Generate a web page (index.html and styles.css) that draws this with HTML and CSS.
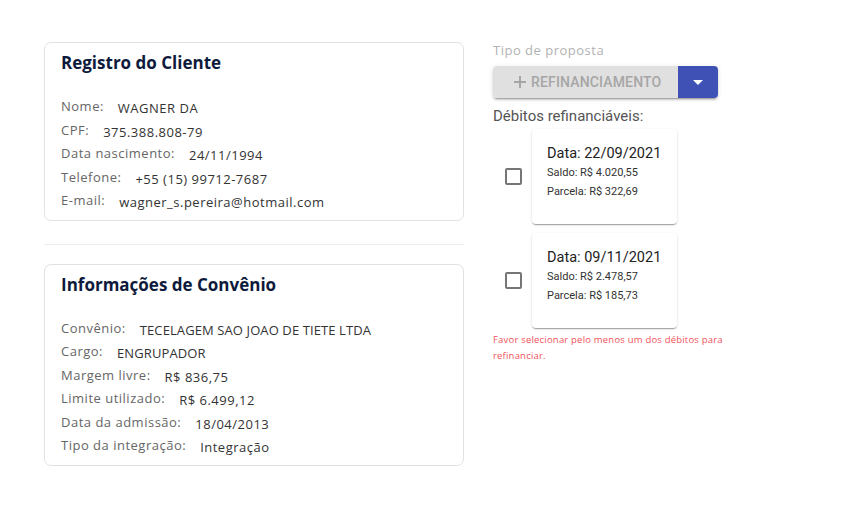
FILE: index.html
```html
<!DOCTYPE html>
<html lang="pt-BR">
<head>
<meta charset="utf-8">
<title>Refinanciamento</title>
<link rel="stylesheet" href="styles.css">
</head>
<body>
<div class="page">
  <div class="left">
    <section class="card">
      <h2 class="card-title">Registro do Cliente</h2>
      <div class="rows">
        <div class="row"><span class="label">Nome:</span><span class="value">WAGNER DA</span></div>
        <div class="row"><span class="label">CPF:</span><span class="value">375.388.808-79</span></div>
        <div class="row"><span class="label">Data nascimento:</span><span class="value">24/11/1994</span></div>
        <div class="row"><span class="label">Telefone:</span><span class="value">+55 (15) 99712-7687</span></div>
        <div class="row"><span class="label">E-mail:</span><span class="value">wagner_s.pereira@hotmail.com</span></div>
      </div>
    </section>
    <hr class="divider">
    <section class="card">
      <h2 class="card-title">Informações de Convênio</h2>
      <div class="rows">
        <div class="row"><span class="label">Convênio:</span><span class="value caps">TECELAGEM SAO JOAO DE TIETE LTDA</span></div>
        <div class="row"><span class="label">Cargo:</span><span class="value caps">ENGRUPADOR</span></div>
        <div class="row"><span class="label">Margem livre:</span><span class="value">R$ 836,75</span></div>
        <div class="row"><span class="label">Limite utilizado:</span><span class="value">R$ 6.499,12</span></div>
        <div class="row"><span class="label">Data da admissão:</span><span class="value">18/04/2013</span></div>
        <div class="row"><span class="label">Tipo da integração:</span><span class="value">Integração</span></div>
      </div>
    </section>
  </div>

  <div class="right">
    <div class="field-label">Tipo de proposta</div>
    <div class="split-btn">
      <button class="btn-main" type="button">
        <svg class="plus" width="14" height="14" viewBox="0 0 14 14" aria-hidden="true"><path d="M7 1v12M1 7h12" stroke="currentColor" stroke-width="2" fill="none"/></svg>
        <span>REFINANCIAMENTO</span>
      </button>
      <button class="btn-drop" type="button" aria-label="Abrir">
        <svg width="10" height="5" viewBox="0 0 10 5" aria-hidden="true"><path d="M0 0h10L5 5z" fill="#fff"/></svg>
      </button>
    </div>
    <div class="debits-label">Débitos refinanciáveis:</div>
    <div class="debit-list">
      <div class="debit">
        <span class="checkbox"></span>
        <div class="debit-card">
          <div class="debit-date">Data: 22/09/2021</div>
          <div class="debit-line">Saldo: R$ 4.020,55</div>
          <div class="debit-line">Parcela: R$ 322,69</div>
        </div>
      </div>
      <div class="debit">
        <span class="checkbox"></span>
        <div class="debit-card">
          <div class="debit-date">Data: 09/11/2021</div>
          <div class="debit-line">Saldo: R$ 2.478,57</div>
          <div class="debit-line">Parcela: R$ 185,73</div>
        </div>
      </div>
    </div>
    <p class="error">Favor selecionar pelo menos um dos débitos para refinanciar.</p>
  </div>
</div>
</body>
</html>
```
FILE: styles.css
```css
* { box-sizing: border-box; }
html, body { margin: 0; padding: 0; background: #fff; }
body { font-family: "Open Sans", "Noto Sans", sans-serif; color: #333; }

.page {
  display: flex;
  gap: 29px;
  padding: 42px 0 0 44px;
}

.left { width: 420px; display: flex; flex-direction: column; }

.card {
  border: 1px solid #e2e2e2;
  border-radius: 7px;
  padding: 8px 16px 7px 16px;
}

.card-title {
  margin: 0 0 20px;
  font-size: 17px;
  line-height: 24px;
  font-weight: 700;
  color: #0e1a3c;
}

.rows { display: flex; flex-direction: column; }

.row {
  display: flex;
  align-items: baseline;
  gap: 14px;
  height: 23.5px;
  line-height: 23.5px;
}

.label { font-size: 13px; letter-spacing: 0.5px; color: #666; }
.value { font-size: 13px; letter-spacing: 0.5px; color: #333; position: relative; top: 2px; }
.value.caps { letter-spacing: 0.1px; }

.divider {
  border: 0;
  border-top: 1px solid #ececec;
  margin: 23px 0 19px;
  height: 0;
}

.right { width: 240px; display: flex; flex-direction: column; }

.field-label {
  font-size: 13px;
  letter-spacing: 0.5px;
  line-height: 17px;
  color: #b2b2b2;
}

.split-btn {
  display: flex;
  width: 225px;
  height: 32px;
  margin-top: 7px;
  border-radius: 4px;
  box-shadow: 0 3px 1px -2px rgba(0,0,0,.2), 0 2px 2px 0 rgba(0,0,0,.14), 0 1px 5px 0 rgba(0,0,0,.12);
  overflow: hidden;
}

.btn-main {
  flex: 1;
  display: flex;
  align-items: center;
  gap: 4px;
  padding: 0 0 0 20px;
  border: 0;
  background: #e0e0e0;
  color: #a6a6a6;
  font-family: Roboto, "Liberation Sans", sans-serif;
  font-weight: 500;
  font-size: 14px;
  letter-spacing: 0.15px;
}

.plus { color: #a6a6a6; }

.btn-drop {
  width: 40px;
  display: flex;
  align-items: center;
  justify-content: center;
  border: 0;
  padding: 0;
  background: #3f51b5;
}

.debits-label {
  margin-top: 9px;
  font-family: Roboto, "Liberation Sans", sans-serif;
  font-size: 15px;
  line-height: 18px;
  color: #555;
}

.debit-list {
  margin-top: 4px;
  display: flex;
  flex-direction: column;
  gap: 9px;
}

.debit { display: flex; align-items: center; }

.checkbox {
  width: 17px;
  height: 17px;
  margin-left: 12px;
  margin-right: 10px;
  border: 2px solid #767676;
  border-radius: 2px;
}

.debit-card {
  width: 145px;
  height: 95px;
  padding: 16px 0 0 15px;
  border-radius: 4px;
  background: #fff;
  box-shadow: 0 2px 1px -1px rgba(0,0,0,.2), 0 1px 1px 0 rgba(0,0,0,.14), 0 1px 3px 0 rgba(0,0,0,.12);
  font-family: Roboto, "Liberation Sans", sans-serif;
}

.debit-date { font-size: 14.5px; line-height: 18px; color: #222; }
.debit-line { font-size: 11px; line-height: 19px; color: #333; }

.error {
  margin: 4px 0 0;
  font-size: 9.5px;
  letter-spacing: 0.2px;
  line-height: 15.5px;
  color: #f0525a;
}
```
